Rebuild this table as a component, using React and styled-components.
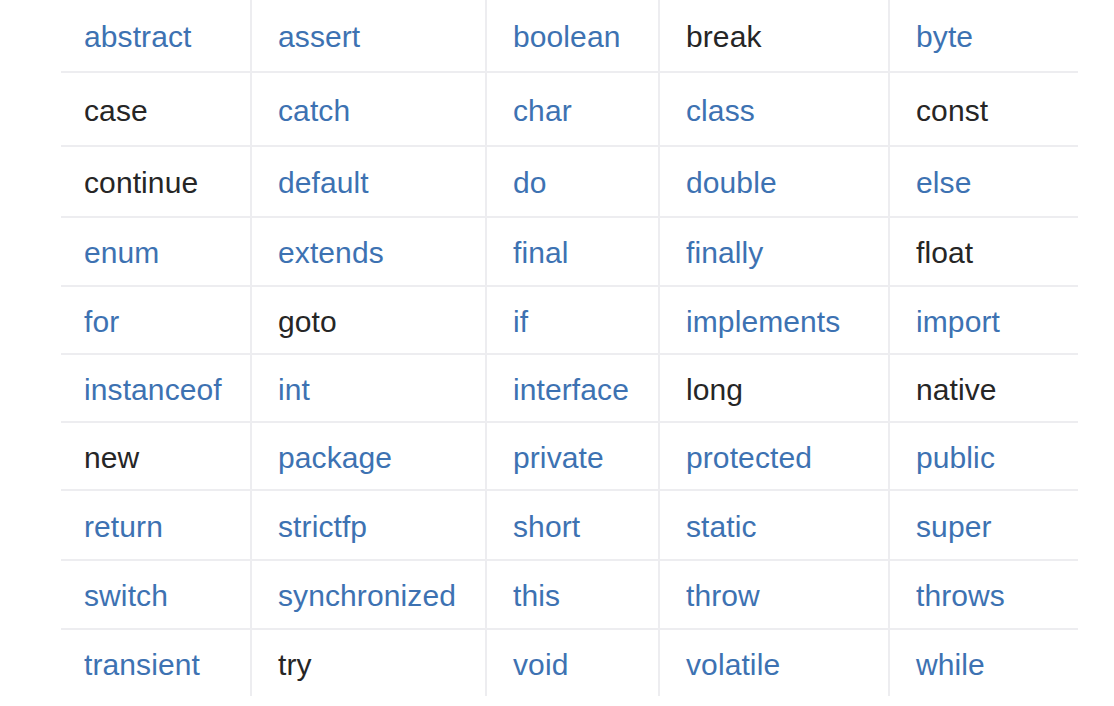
import React from 'react';
import styled, { createGlobalStyle } from 'styled-components';

const GlobalStyle = createGlobalStyle`
  html, body {
    margin: 0;
    padding: 0;
    background: #ffffff;
  }
  body {
    font-family: "Liberation Sans", Arial, sans-serif;
  }
`;

// keywords in row order, "dark" ones are not links on the original page
const rows = [
  ['abstract', 'assert', 'boolean', 'break', 'byte'],
  ['case', 'catch', 'char', 'class', 'const'],
  ['continue', 'default', 'do', 'double', 'else'],
  ['enum', 'extends', 'final', 'finally', 'float'],
  ['for', 'goto', 'if', 'implements', 'import'],
  ['instanceof', 'int', 'interface', 'long', 'native'],
  ['new', 'package', 'private', 'protected', 'public'],
  ['return', 'strictfp', 'short', 'static', 'super'],
  ['switch', 'synchronized', 'this', 'throw', 'throws'],
  ['transient', 'try', 'void', 'volatile', 'while'],
];

const dark = ['break', 'case', 'const', 'continue', 'float', 'goto', 'long', 'native', 'new', 'try'];

const rowHeights = [73, 74, 71, 69, 68, 68, 68, 70, 69, 66];

const Page = styled.div`
  padding-left: 61px;
`;

const Table = styled.div`
  display: grid;
  grid-template-columns: 189px 235px 173px 230px 190px;
  grid-template-rows: ${rowHeights.map((h) => `${h}px`).join(' ')};
  width: 1017px;
`;

const Cell = styled.div`
  display: flex;
  align-items: center;
  padding-top: 3px;
  padding-left: ${(p) => (p.$first ? '23px' : '26px')};
  border-left: ${(p) => (p.$first ? 'none' : '2px solid #ededf0')};
  border-bottom: ${(p) => (p.$last ? 'none' : '2px solid #ededf0')};
  font-size: 30px;
  letter-spacing: 0.1px;
  color: ${(p) => (p.$dark ? '#262626' : '#3d72b2')};
  white-space: nowrap;
  box-sizing: border-box;
`;

const App = () => {
  return (
    <Page>
      <GlobalStyle />
      <Table>
        {rows.map((row, r) =>
          row.map((word, c) => (
            <Cell
              key={word}
              $first={c === 0}
              $last={r === rows.length - 1}
              $dark={dark.includes(word)}
            >
              {word}
            </Cell>
          ))
        )}
      </Table>
    </Page>
  );
};

export default App;
